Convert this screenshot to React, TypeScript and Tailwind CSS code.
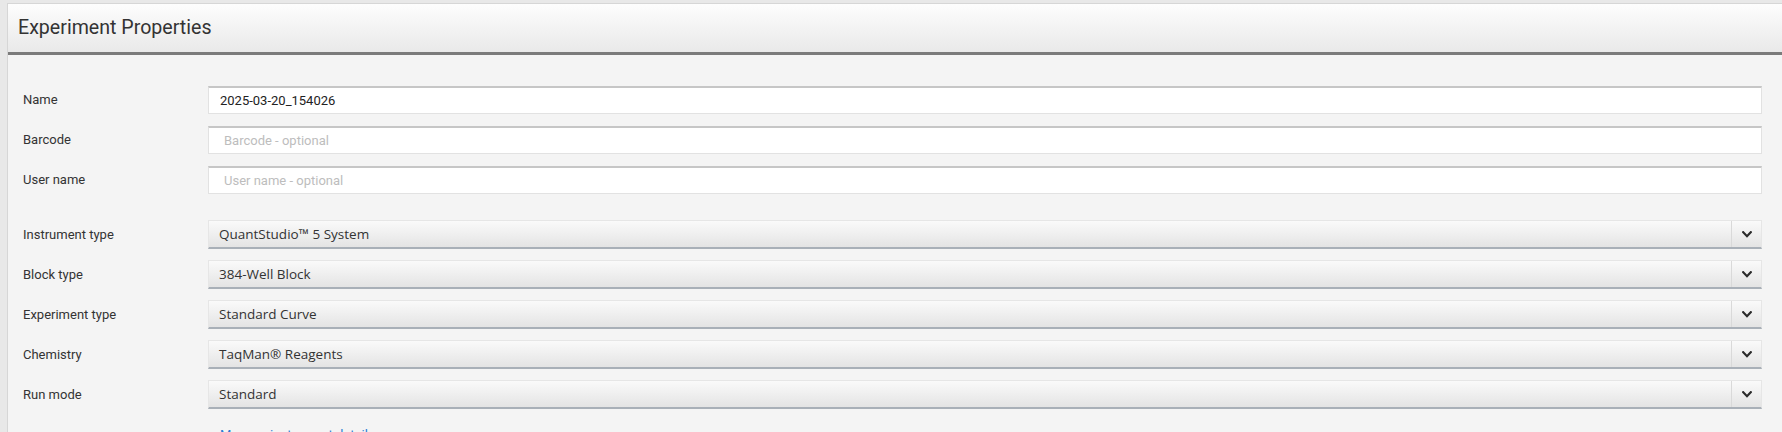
import React from 'react';

const textFields = [
  { label: 'Name', value: '2025-03-20_154026', placeholder: '' },
  { label: 'Barcode', value: '', placeholder: 'Barcode - optional' },
  { label: 'User name', value: '', placeholder: 'User name - optional' },
];

const selectFields = [
  { label: 'Instrument type', value: 'QuantStudio™ 5 System' },
  { label: 'Block type', value: '384-Well Block' },
  { label: 'Experiment type', value: 'Standard Curve' },
  { label: 'Chemistry', value: 'TaqMan® Reagents' },
  { label: 'Run mode', value: 'Standard' },
];

function Chevron() {
  return (
    <svg width="10" height="7" viewBox="0 0 10 7" fill="none">
      <path d="M1.2 1.2 L5 5.2 L8.8 1.2" stroke="#2b2b2b" strokeWidth="2.2" strokeLinecap="square" />
    </svg>
  );
}

export default function App() {
  return (
    <div className="h-[432px] w-full overflow-hidden bg-[#e8e8e8] pl-[7px] pt-[3px] font-['Roboto',sans-serif]">
      <div className="h-full border-l border-t border-[#d6d6d6] bg-[#f4f4f4]">
        <div className="flex h-[48px] items-center bg-gradient-to-b from-[#fdfdfd] to-[#e9e9e9] pl-[10px]">
          <h1 className="text-[19.6px] leading-none text-[#333]">Experiment Properties</h1>
        </div>
        <div className="h-[3px] bg-[#7b7b7b]" />

        <div className="flex flex-col pl-[15px] pr-[20px] pt-[31px]">
          <div className="flex flex-col gap-[12px]">
            {textFields.map((f) => (
              <div key={f.label} className="grid grid-cols-[185px_1fr] items-center">
                <label className="text-[13px] text-[#333]">{f.label}</label>
                <div className="flex h-[28px] items-center border border-t-2 border-[#e2e2e2] border-t-[#c6c6c6] bg-white">
                  {f.value ? (
                    <span className="pl-[11px] text-[13px] text-[#222]">{f.value}</span>
                  ) : (
                    <span className="pl-[15px] text-[13px] text-[#bdbdbd]">{f.placeholder}</span>
                  )}
                </div>
              </div>
            ))}
          </div>

          <div className="mt-[26px] flex flex-col gap-[11px]">
            {selectFields.map((f) => (
              <div key={f.label} className="grid grid-cols-[185px_1fr] items-center">
                <label className="text-[13px] text-[#333]">{f.label}</label>
                <div className="flex h-[29px] border border-b-2 border-[#e6e6e6] border-b-[#a9b0b8] bg-gradient-to-b from-[#fafafa] to-[#e4e4e4]">
                  <span className="flex flex-1 items-center pl-[10px] font-['Open_Sans',sans-serif] text-[13.5px] text-[#333]">
                    {f.value}
                  </span>
                  <span className="flex w-[30px] items-center justify-center border-l border-[#d9d9d9]">
                    <Chevron />
                  </span>
                </div>
              </div>
            ))}
          </div>

          <div className="mt-[16px] pl-[197px] text-[13px] text-[#2a7bd3]">Manage instrument details</div>
        </div>
      </div>
    </div>
  );
}
